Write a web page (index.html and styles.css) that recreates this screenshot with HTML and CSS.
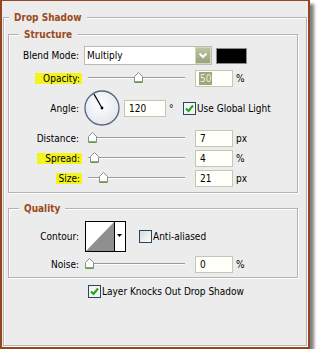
FILE: index.html
```html
<!DOCTYPE html>
<html>
<head>
  <meta charset="utf-8">
  <link rel="stylesheet" href="styles.css">
</head>
<body>
  <div id="dialog">
    <div class="group outer">
      <div class="legend">Drop Shadow</div>

      <!-- Structure -->
      <div class="group structure">
        <div class="legend">Structure</div>

        <div class="row blend-row">
          <span class="label">Blend Mode:</span>
          <div class="select">
            <span class="select-text">Multiply</span>
            <span class="select-btn">
              <svg width="16" height="17" viewBox="0 0 16 17">
                <defs>
                  <linearGradient id="btnGrad" x1="0" y1="0" x2="0" y2="1">
                    <stop offset="0" stop-color="#bcc4a2"/>
                    <stop offset="1" stop-color="#98a37c"/>
                  </linearGradient>
                </defs>
                <rect x="0.5" y="0.5" width="15" height="16" fill="url(#btnGrad)" stroke="#d2d8bf"/>
                <path d="M4.5 6.5 L8 10 L11.5 6.5" fill="none" stroke="#fff" stroke-width="2"/>
              </svg>
            </span>
          </div>
          <span class="swatch"></span>
        </div>

        <div class="row opacity-row">
          <span class="label"><span class="hl wide">Opacity:</span></span>
          <div class="slider">
            <div class="rail">
              <span class="thumb" style="left: 50%">
                <svg width="9" height="11" viewBox="0 0 9 11"><path d="M4.5 0.5 L8.5 4.5 L8.5 10.5 L0.5 10.5 L0.5 4.5 Z" fill="#fff" stroke="#8c8c8c"/><path d="M1 10 H8" stroke="#5d9a3a" stroke-width="1.5"/></svg>
              </span>
            </div>
          </div>
          <span class="field"><span class="selected">50</span></span>
          <span class="unit">%</span>
        </div>

        <div class="row angle-row">
          <span class="label">Angle:</span>
          <span class="dial">
            <svg width="36" height="36" viewBox="0 0 36 36">
              <defs>
                <radialGradient id="dialGrad" cx="0.45" cy="0.4" r="0.6">
                  <stop offset="0" stop-color="#ffffff"/>
                  <stop offset="1" stop-color="#e3e7ee"/>
                </radialGradient>
              </defs>
              <circle cx="18" cy="18" r="17" fill="url(#dialGrad)" stroke="#55647f" stroke-width="1.3"/>
              <line x1="18" y1="18" x2="10" y2="4.1" stroke="#000" stroke-width="1.2"/>
              <circle cx="18" cy="18" r="1.4" fill="#000"/>
            </svg>
          </span>
          <span class="field angle-field">120</span>
          <span class="deg">&deg;</span>
          <span class="check on">
            <svg width="13" height="13" viewBox="0 0 13 13"><rect x="0.5" y="0.5" width="12" height="12" fill="#f4f4f0" stroke="#23466d"/><path d="M3 6.5 L5.5 9 L10 3.5" fill="none" stroke="#22a122" stroke-width="2"/></svg>
          </span>
          <span class="check-text">Use Global Light</span>
        </div>

        <div class="row distance-row">
          <span class="label">Distance:</span>
          <div class="slider">
            <div class="rail">
              <span class="thumb" style="left: 3%">
                <svg width="9" height="11" viewBox="0 0 9 11"><path d="M4.5 0.5 L8.5 4.5 L8.5 10.5 L0.5 10.5 L0.5 4.5 Z" fill="#fff" stroke="#8c8c8c"/><path d="M1 10 H8" stroke="#5d9a3a" stroke-width="1.5"/></svg>
              </span>
            </div>
          </div>
          <span class="field">7</span>
          <span class="unit">px</span>
        </div>

        <div class="row">
          <span class="label"><span class="hl wide">Spread:</span></span>
          <div class="slider">
            <div class="rail">
              <span class="thumb" style="left: 5%">
                <svg width="9" height="11" viewBox="0 0 9 11"><path d="M4.5 0.5 L8.5 4.5 L8.5 10.5 L0.5 10.5 L0.5 4.5 Z" fill="#fff" stroke="#8c8c8c"/><path d="M1 10 H8" stroke="#5d9a3a" stroke-width="1.5"/></svg>
              </span>
            </div>
          </div>
          <span class="field">4</span>
          <span class="unit">%</span>
        </div>

        <div class="row">
          <span class="label"><span class="hl">Size:</span></span>
          <div class="slider">
            <div class="rail">
              <span class="thumb" style="left: 14%">
                <svg width="9" height="11" viewBox="0 0 9 11"><path d="M4.5 0.5 L8.5 4.5 L8.5 10.5 L0.5 10.5 L0.5 4.5 Z" fill="#fff" stroke="#8c8c8c"/><path d="M1 10 H8" stroke="#5d9a3a" stroke-width="1.5"/></svg>
              </span>
            </div>
          </div>
          <span class="field">21</span>
          <span class="unit">px</span>
        </div>
      </div>

      <!-- Quality -->
      <div class="group quality">
        <div class="legend">Quality</div>

        <div class="row contour-row">
          <span class="label">Contour:</span>
          <span class="contour">
            <svg width="41" height="31" viewBox="0 0 41 31">
              <rect x="0.5" y="0.5" width="40" height="30" fill="#fff" stroke="#000"/>
              <polygon points="1,30 29,1 29,30" fill="#8f8f8f"/>
              <line x1="29.5" y1="0" x2="29.5" y2="31" stroke="#000"/>
              <polygon points="32,13 37,13 34.5,16" fill="#000"/>
            </svg>
          </span>
          <span class="check">
            <svg width="13" height="13" viewBox="0 0 13 13">
              <defs>
                <linearGradient id="boxGrad" x1="0" y1="0" x2="1" y2="1">
                  <stop offset="0" stop-color="#d8d8d2"/>
                  <stop offset="1" stop-color="#ffffff"/>
                </linearGradient>
              </defs>
              <rect x="0.5" y="0.5" width="12" height="12" fill="url(#boxGrad)" stroke="#23466d"/>
            </svg>
          </span>
          <span class="check-text">Anti-aliased</span>
        </div>

        <div class="row noise-row">
          <span class="label">Noise:</span>
          <div class="slider">
            <div class="rail">
              <span class="thumb" style="left: 0%">
                <svg width="9" height="11" viewBox="0 0 9 11"><path d="M4.5 0.5 L8.5 4.5 L8.5 10.5 L0.5 10.5 L0.5 4.5 Z" fill="#fff" stroke="#8c8c8c"/><path d="M1 10 H8" stroke="#5d9a3a" stroke-width="1.5"/></svg>
              </span>
            </div>
          </div>
          <span class="field">0</span>
          <span class="unit">%</span>
        </div>
      </div>

      <div class="row knockout-row">
        <span class="check on">
          <svg width="13" height="13" viewBox="0 0 13 13"><rect x="0.5" y="0.5" width="12" height="12" fill="#f4f4f0" stroke="#23466d"/><path d="M3 6.5 L5.5 9 L10 3.5" fill="none" stroke="#22a122" stroke-width="2"/></svg>
        </span>
        <span class="check-text">Layer Knocks Out Drop Shadow</span>
      </div>
    </div>
  </div>
</body>
</html>
```

FILE: styles.css
```css
* {
  box-sizing: border-box;
}

body {
  margin: 0;
  background-color: #ffffff;
  font-family: "DejaVu Sans Condensed", "DejaVu Sans", sans-serif;
  font-size: 10px;
  color: #000000;
}

#dialog {
  width: 310px;
  height: 349px;
  background-color: #ececec;
  border: 2px solid #93461f;
  border-top-width: 1px;
  box-shadow: 4px 4px 3px rgba(0,0,0,0.5);
  padding: 16px 1px 0 1px;
}

.group {
  border: 1px solid #b3b3b3;
  box-shadow: inset 1px 1px 0 #ffffff, 1px 1px 0 #ffffff;
}

.outer {
  width: 304px;
  height: 329px;
}

.legend {
  width: max-content;
  height: 12px;
  line-height: 12px;
  margin-top: -6px;
  margin-left: 10px;
  padding: 0 5px;
  background-color: #ececec;
  color: #9a4a1c;
  font-weight: bold;
}

.outer > .legend {
  margin-left: 5px;
}

.structure {
  width: 290px;
  height: 159px;
  margin: 10px 0 0 4px;
}

.quality {
  width: 290px;
  height: 70px;
  margin: 15px 0 0 4px;
}

/* rows */
.row {
  display: flex;
  align-items: center;
  height: 17px;
  margin-top: 3px;
}

.blend-row {
  height: 19px;
  margin-top: 5px;
}

.opacity-row {
  margin-top: 5px;
}

.angle-row {
  height: 36px;
}

.distance-row {
  margin-top: 4px;
}

.contour-row {
  height: 31px;
  margin-top: 6px;
}

.noise-row {
  margin-top: 4px;
}

.knockout-row {
  height: 13px;
  margin: 7px 0 0 84px;
}

.label {
  flex: none;
  width: 70px;
  text-align: right;
  white-space: nowrap;
}

.hl {
  display: inline-block;
  line-height: 11px;
  padding: 0 2px;
  margin-right: -3px;
  background-color: #f3f31e;
}

.hl.wide {
  padding-left: 8px;
}

/* blend mode select */
.select {
  display: flex;
  align-items: center;
  width: 128px;
  height: 19px;
  margin-left: 5px;
  padding-left: 2px;
  background-color: #ffffff;
  border: 1px solid #b9bcae;
}

.select-btn {
  display: flex;
  margin-left: auto;
}

.swatch {
  width: 31px;
  height: 16px;
  margin-left: 4px;
  background-color: #000000;
  border: 1px solid #8a8a8a;
}

/* sliders */
.slider {
  position: relative;
  flex: none;
  width: 110px;
  height: 17px;
  margin-left: 6px;
}

.slider::before {
  content: "";
  position: absolute;
  left: 3px;
  top: 7px;
  width: 97px;
  height: 1px;
  background-color: #9a9a9a;
  border-bottom: 1px solid #ffffff;
  box-sizing: content-box;
}

.rail {
  position: absolute;
  left: 0;
  right: 13px;
  top: 2px;
  height: 11px;
}

.thumb {
  position: absolute;
  top: 0;
  display: flex;
}

/* text fields */
.field {
  flex: none;
  width: 38px;
  height: 17px;
  line-height: 15px;
  padding-left: 4px;
  background-color: #fffffa;
  border: 1px solid #c4c8b2;
}

.field .selected {
  display: inline-block;
  line-height: 13px;
  margin-left: -1px;
  padding: 0 1px;
  background-color: #a3a37c;
  color: #ececdc;
}

.unit {
  margin-left: 3px;
}

.dial {
  display: flex;
  margin-left: 5px;
}

.angle-field {
  width: 42px;
  margin-left: 4px;
}

.deg {
  width: 17px;
  padding-left: 3px;
}

.check {
  display: flex;
}

.check-text {
  margin-left: 1px;
  white-space: nowrap;
}

.contour {
  display: flex;
  margin-left: 6px;
}

.contour + .check {
  margin-left: 13px;
}
```
